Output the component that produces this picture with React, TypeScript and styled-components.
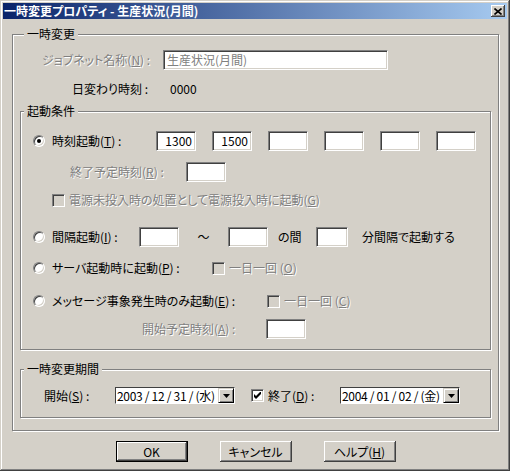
import * as React from 'react';
import styled, { createGlobalStyle, css } from 'styled-components';

const GlobalStyle = createGlobalStyle`
    html, body {
        margin: 0;
        padding: 0;
        background: #d4d0c8;
    }
    body {
        font-family: "Noto Sans CJK JP", "Liberation Sans", sans-serif;
        font-size: 12px;
        line-height: 14px;
        color: #000;
        font-feature-settings: "palt";
    }
`;

// sunken edge used by text boxes, checkboxes, radios
const sunken = css`
    border: 1px solid;
    border-color: #808080 #fff #fff #808080;
    box-shadow: inset 1px 1px #404040, inset -1px -1px #d4d0c8;
`;

const raised = css`
    box-shadow: inset -1px -1px #404040, inset 1px 1px #fff, inset -2px -2px #808080, inset 2px 2px #d4d0c8;
`;

export default function App() {
    return (
        <>
            <GlobalStyle />
            <Window>
                <TitleBar>
                    <TitleText>一時変更プロパティ - 生産状況(月間)</TitleText>
                    <CloseButton>
                        <svg width="8" height="7" viewBox="0 0 8 7">
                            <path d="M0.5 0.5 L7.5 6.5 M7.5 0.5 L0.5 6.5" stroke="#000" strokeWidth="1.6" />
                        </svg>
                    </CloseButton>
                </TitleBar>

                <Body>
                    <GroupBox $pb={12} $px={7}>
                        <Caption $ml={4}>一時変更</Caption>

                        <Row $h={20} $mt={9} $indent={22}>
                            <Label $w={121} $disabled>ジョブネット名称(<u>N</u>) :</Label>
                            <TextBox $w={225} $disabled>生産状況(月間)</TextBox>
                        </Row>
                        <Row $h={18} $mt={10} $indent={52}>
                            <Label $w={98}>日変わり時刻 :</Label>
                            <Label>0000</Label>
                        </Row>

                        <GroupBox $mt={13} $pb={10}>
                            <Caption $ml={3}>起動条件</Caption>

                            <Row $h={20} $mt={13} $indent={12}>
                                <Radio $checked />
                                <Label $ml={7} $w={104}>時刻起動(<u>T</u>) :</Label>
                                <TimeBoxes>
                                    <TextBox $w={40} $right>1300</TextBox>
                                    <TextBox $w={40} $right>1500</TextBox>
                                    <TextBox $w={40} $right />
                                    <TextBox $w={40} $right />
                                    <TextBox $w={40} $right />
                                    <TextBox $w={40} $right />
                                </TimeBoxes>
                            </Row>
                            <Row $h={20} $mt={11} $indent={49}>
                                <Label $w={116} $disabled>終了予定時刻(<u>R</u>) :</Label>
                                <TextBox $w={40} />
                            </Row>
                            <Row $h={18} $mt={9} $indent={31}>
                                <Check $disabled />
                                <Label $ml={4} $disabled>電源未投入時の処置として電源投入時に起動(<u>G</u>)</Label>
                            </Row>

                            <Row $h={20} $mt={18} $indent={12}>
                                <Radio />
                                <Label $ml={7} $w={87}>間隔起動(<u>I</u>) :</Label>
                                <TextBox $w={40} />
                                <Label $w={49} $center>～</Label>
                                <TextBox $w={40} />
                                <Label $w={38} $ml={10}>の間</Label>
                                <TextBox $w={32} />
                                <Label $ml={14}>分間隔で起動する</Label>
                            </Row>
                            <Row $h={18} $mt={12} $indent={12}>
                                <Radio />
                                <Label $ml={7} $w={160}>サーバ起動時に起動(<u>P</u>) :</Label>
                                <Check $disabled />
                                <Label $ml={4} $disabled>一日一回 (<u>O</u>)</Label>
                            </Row>
                            <Row $h={18} $mt={15} $indent={12}>
                                <Radio />
                                <Label $ml={7} $w={215}>メッセージ事象発生時のみ起動(<u>E</u>) :</Label>
                                <Check $disabled />
                                <Label $ml={4} $disabled>一日一回 (<u>C</u>)</Label>
                            </Row>
                            <Row $h={20} $mt={9} $indent={121}>
                                <Label $w={124} $disabled>開始予定時刻(<u>A</u>) :</Label>
                                <TextBox $w={40} />
                            </Row>
                        </GroupBox>

                        <GroupBox $mt={19} $pb={13}>
                            <Caption $ml={3}>一時変更期間</Caption>
                            <Row $h={17} $mt={11} $indent={23}>
                                <Label $w={71}>開始(<u>S</u>) :</Label>
                                <DateCombo value="2003 / 12 / 31 / (水)" />
                                <Check $checked $ml={16}>
                                    <svg width="7" height="7" viewBox="0 0 7 7">
                                        <polygon points="0,2 2,4 7,-1 7,2 2,7 0,5" fill="#000" />
                                    </svg>
                                </Check>
                                <Label $ml={4} $w={72}>終了(<u>D</u>) :</Label>
                                <DateCombo value="2004 / 01 / 02 / (金)" />
                            </Row>
                        </GroupBox>
                    </GroupBox>

                    <ButtonRow>
                        <PushButton $default>OK</PushButton>
                        <PushButton>キャンセル</PushButton>
                        <PushButton>ヘルプ(<u>H</u>)</PushButton>
                    </ButtonRow>
                </Body>
            </Window>
        </>
    );
}

const DateCombo = ({ value }: { value: string }) => (
    <Combo>
        <ComboText>{value}</ComboText>
        <ComboButton>
            <svg width="7" height="4" viewBox="0 0 7 4">
                <polygon points="0,0 7,0 3.5,4" fill="#000" />
            </svg>
        </ComboButton>
    </Combo>
);

const Window = styled.div`
    width: 510px;
    height: 471px;
    box-sizing: border-box;
    padding: 3px;
    background: #d4d0c8;
    box-shadow: inset -1px -1px #404040, inset 1px 1px #d4d0c8, inset -2px -2px #808080, inset 2px 2px #fff;
`;

const TitleBar = styled.div`
    height: 16px;
    display: flex;
    align-items: center;
    padding: 0 2px 0 1px;
    background: linear-gradient(to right, #0a246a, #a6caf0);
`;

const TitleText = styled.span`
    color: #fff;
    font-weight: bold;
    font-size: 12px;
    white-space: pre;
`;

const CloseButton = styled.span`
    margin-left: auto;
    width: 14px;
    height: 12px;
    display: flex;
    align-items: center;
    justify-content: center;
    background: #d4d0c8;
    ${raised};
`;

const Body = styled.div`
    padding: 15px 8px 0 9px;
`;

const GroupBox = styled.div<{ $mt?: number; $pb: number; $px?: number }>`
    border: 1px solid #808080;
    box-shadow: inset 1px 1px #fff, 1px 1px #fff;
    margin-top: ${p => p.$mt ?? 0}px;
    padding: 0 ${p => p.$px ?? 0}px ${p => p.$pb}px;
`;

const Caption = styled.div<{ $ml: number }>`
    width: fit-content;
    height: 14px;
    margin: -8px 0 0 ${p => p.$ml}px;
    padding: 0 3px;
    background: #d4d0c8;
    white-space: pre;
`;

const Row = styled.div<{ $h: number; $mt: number; $indent: number }>`
    display: flex;
    align-items: center;
    height: ${p => p.$h}px;
    margin-top: ${p => p.$mt}px;
    padding-left: ${p => p.$indent}px;
`;

const Label = styled.span<{ $w?: number; $ml?: number; $disabled?: boolean; $center?: boolean }>`
    flex: none;
    white-space: pre;
    width: ${p => (p.$w ? `${p.$w}px` : 'auto')};
    margin-left: ${p => p.$ml ?? 0}px;
    text-align: ${p => (p.$center ? 'center' : 'left')};
    ${p => p.$disabled && css`
        color: #808080;
        text-shadow: 1px 1px 0 #fff;
    `}
`;

const TimeBoxes = styled.div`
    display: flex;
    gap: 16px;
`;

const TextBox = styled.div<{ $w: number; $right?: boolean; $disabled?: boolean }>`
    flex: none;
    box-sizing: border-box;
    width: ${p => p.$w}px;
    height: 20px;
    background: #fff;
    ${sunken};
    padding: 0 3px;
    display: flex;
    align-items: center;
    justify-content: ${p => (p.$right ? 'flex-end' : 'flex-start')};
    white-space: pre;
    color: ${p => (p.$disabled ? '#808080' : '#000')};
`;

const Radio = styled.span<{ $checked?: boolean }>`
    flex: none;
    box-sizing: border-box;
    width: 12px;
    height: 12px;
    border-radius: 50%;
    background: #fff;
    ${sunken};
    display: flex;
    align-items: center;
    justify-content: center;
    &::after {
        content: '';
        display: ${p => (p.$checked ? 'block' : 'none')};
        width: 4px;
        height: 4px;
        border-radius: 50%;
        background: #000;
    }
`;

const Check = styled.span<{ $checked?: boolean; $disabled?: boolean; $ml?: number }>`
    flex: none;
    box-sizing: border-box;
    width: 13px;
    height: 13px;
    margin-left: ${p => p.$ml ?? 0}px;
    background: ${p => (p.$disabled ? '#d4d0c8' : '#fff')};
    ${sunken};
    display: flex;
    align-items: center;
    justify-content: center;
`;

const Combo = styled.div`
    flex: none;
    box-sizing: border-box;
    width: 120px;
    height: 17px;
    display: flex;
    background: #fff;
    border: 1px solid;
    border-color: #404040 #fff #fff #404040;
    padding: 0 0 0 1px;
`;

const ComboText = styled.span`
    flex: 1;
    white-space: pre;
    line-height: 15px;
    letter-spacing: -0.3px;
    overflow: hidden;
`;

const ComboButton = styled.span`
    flex: none;
    width: 16px;
    height: 15px;
    box-sizing: border-box;
    background: #d4d0c8;
    border: 1px solid #000;
    border-top-color: #d4d0c8;
    border-left-color: #d4d0c8;
    box-shadow: inset 1px 1px #fff, inset -1px -1px #808080;
    display: flex;
    align-items: center;
    justify-content: center;
`;

const ButtonRow = styled.div`
    display: flex;
    justify-content: center;
    gap: 32px;
    margin-top: 10px;
`;

const PushButton = styled.button<{ $default?: boolean }>`
    width: 72px;
    height: 21px;
    box-sizing: border-box;
    padding: 0;
    border: none;
    background: #d4d0c8;
    font: inherit;
    color: #000;
    ${raised};
    ${p => p.$default && css`
        border: 1px solid #000;
        box-shadow: inset -1px -1px #404040, inset 1px 1px #fff, inset -2px -2px #808080;
    `}
`;
